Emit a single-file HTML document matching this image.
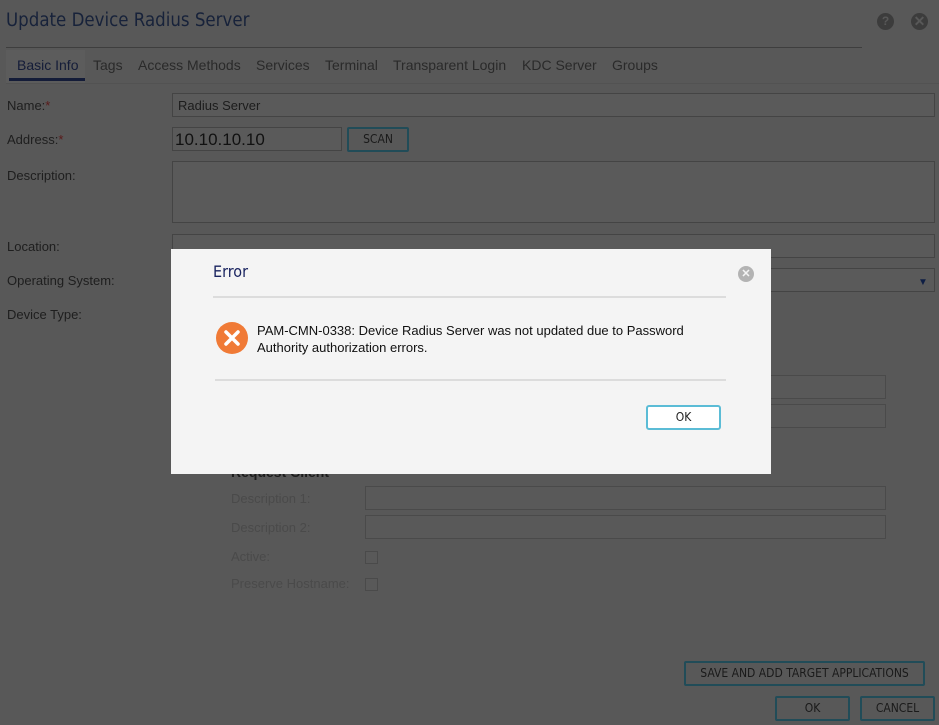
<!DOCTYPE html>
<html><head><meta charset="utf-8"><style>
*{margin:0;padding:0;box-sizing:border-box}
body{width:939px;height:725px;background:#585858;font-family:"Liberation Sans",sans-serif;position:relative;overflow:hidden;color:#1c1c1c}
.a{position:absolute}
.lbl{font-size:13px;color:#1e1e1e}
.req{color:#5a1a1a}
.in{position:absolute;border:1px solid #444;background:#5a5a5a}
.lbl2{font-size:13px;color:#4a4a4a}
.in2{position:absolute;border:1px solid #4a4a4a;background:#595959}
.btn{position:absolute;border:2px solid #214c58;border-radius:2px;font-size:12px;color:#1a1a1a;text-align:center;font-family:"DejaVu Sans Condensed","Liberation Sans",sans-serif}
.tab{position:absolute;top:57px;font-size:14px;color:#2a2a2a}
</style></head><body>
<div class="a" style="left:6px;top:10px;font-size:18.5px;color:#17223a;font-family:'DejaVu Sans Condensed','Liberation Sans',sans-serif">Update Device Radius Server</div>
<div class="a" style="left:877px;top:13px;width:17px;height:17px;border-radius:50%;background:#3c3c3c;color:#585858;font-size:12px;font-weight:bold;text-align:center;line-height:17px">?</div>
<div class="a" style="left:911px;top:13px;width:17px;height:17px;border-radius:50%;background:#3c3c3c;color:#585858;font-size:14px;font-weight:bold;text-align:center;line-height:17px">✕</div>
<div class="a" style="left:6px;top:47px;width:856px;height:1px;background:#3e3e3e"></div>
<div class="a" style="left:6px;top:83px;width:933px;height:1px;background:#525252"></div>
<div class="a" style="left:6px;top:50px;width:79px;height:33px;background:#5c5c5c"></div>
<div class="tab" style="left:17px;color:#141c38">Basic Info</div>
<div class="a" style="left:9px;top:78px;width:76px;height:3px;background:#141c38"></div>
<div class="tab" style="left:93px">Tags</div>
<div class="tab" style="left:138px">Access Methods</div>
<div class="tab" style="left:256px">Services</div>
<div class="tab" style="left:325px">Terminal</div>
<div class="tab" style="left:393px">Transparent Login</div>
<div class="tab" style="left:522px">KDC Server</div>
<div class="tab" style="left:612px">Groups</div>

<div class="a lbl" style="left:7px;top:98px">Name:<span class="req">*</span></div>
<div class="in" style="left:172px;top:93px;width:763px;height:24px"></div>
<div class="a" style="left:178px;top:98px;font-size:13px">Radius Server</div>
<div class="a lbl" style="left:7px;top:132px">Address:<span class="req">*</span></div>
<div class="in" style="left:172px;top:127px;width:170px;height:24px"></div>
<div class="a" style="left:175px;top:130px;font-size:17px;color:#111">10.10.10.10</div>
<div class="btn" style="left:347px;top:127px;width:62px;height:25px;line-height:21px">SCAN</div>
<div class="a lbl" style="left:7px;top:168px">Description:</div>
<div class="in" style="left:172px;top:161px;width:763px;height:62px"></div>
<div class="a lbl" style="left:7px;top:239px">Location:</div>
<div class="in" style="left:172px;top:234px;width:763px;height:24px"></div>
<div class="a lbl" style="left:7px;top:273px">Operating System:</div>
<div class="in" style="left:172px;top:268px;width:763px;height:24px"></div>
<div class="a" style="left:918px;top:277px;font-size:10px;color:#0e1e44">▼</div>
<div class="a lbl" style="left:7px;top:307px">Device Type:</div>

<div class="in2" style="left:365px;top:375px;width:521px;height:24px"></div>
<div class="in2" style="left:365px;top:404px;width:521px;height:24px"></div>
<div class="a" style="left:231px;top:464px;font-size:14px;font-weight:bold;color:#1c1c1c">Request Client</div>
<div class="a lbl2" style="left:231px;top:491px">Description 1:</div>
<div class="in2" style="left:365px;top:486px;width:521px;height:24px"></div>
<div class="a lbl2" style="left:231px;top:520px">Description 2:</div>
<div class="in2" style="left:365px;top:515px;width:521px;height:24px"></div>
<div class="a lbl2" style="left:231px;top:549px">Active:</div>
<div class="in2" style="left:365px;top:551px;width:13px;height:13px"></div>
<div class="a lbl2" style="left:231px;top:576px">Preserve Hostname:</div>
<div class="in2" style="left:365px;top:578px;width:13px;height:13px"></div>

<div class="btn" style="left:684px;top:661px;width:241px;height:25px;line-height:21px">SAVE AND ADD TARGET APPLICATIONS</div>
<div class="btn" style="left:775px;top:696px;width:75px;height:25px;line-height:21px">OK</div>
<div class="btn" style="left:860px;top:696px;width:75px;height:25px;line-height:21px">CANCEL</div>

<div class="a" style="left:171px;top:249px;width:600px;height:225px;background:#f4f4f4"></div>
<div class="a" style="left:213px;top:262px;font-size:16px;color:#1a2460;font-family:'DejaVu Sans Condensed','Liberation Sans',sans-serif">Error</div>
<div class="a" style="left:738px;top:266px;width:16px;height:16px;border-radius:50%;background:#b3b3b3;color:#f4f4f4;font-size:11px;font-weight:bold;text-align:center;line-height:16px">✕</div>
<div class="a" style="left:213px;top:296px;width:513px;height:2px;background:#dcdcdc"></div>
<svg class="a" style="left:216px;top:322px" width="32" height="32" viewBox="0 0 32 32"><circle cx="16" cy="16" r="16" fill="#f07a36"/><path d="M10 10L22 22M22 10L10 22" stroke="#fff" stroke-width="3.5" stroke-linecap="round"/></svg>
<div class="a" style="left:257px;top:322px;font-size:13px;line-height:17px;color:#111;width:470px">PAM-CMN-0338: Device Radius Server was not updated due to Password Authority authorization errors.</div>
<div class="a" style="left:215px;top:379px;width:511px;height:2px;background:#dcdcdc"></div>
<div class="a" style="left:646px;top:405px;width:75px;height:25px;border:2px solid #5bbcd6;border-radius:3px;background:#fff;font-size:12px;text-align:center;line-height:21px;color:#222;font-family:'DejaVu Sans Condensed','Liberation Sans',sans-serif">OK</div>
</body></html>
